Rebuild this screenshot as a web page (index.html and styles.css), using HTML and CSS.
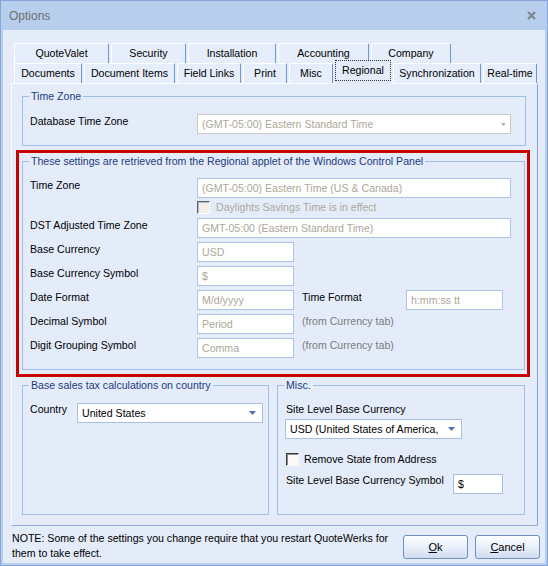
FILE: index.html
```html
<!DOCTYPE html>
<html>
<head>
<meta charset="utf-8">
<title>Options</title>
<link rel="stylesheet" href="styles.css">
</head>
<body>
<div class="window">
  <div class="titlebar">
    <span class="title">Options</span>
    <svg class="close" width="9" height="9" viewBox="0 0 9 9"><path d="M1 1 L8 8 M8 1 L1 8" stroke="#7d8797" stroke-width="2.3" fill="none"/></svg>
  </div>
  <div class="client">
    <div class="tabs">
      <div class="tabrow">
        <div class="tab w95">QuoteValet</div>
        <div class="tab w75">Security</div>
        <div class="tab w88">Installation</div>
        <div class="tab w91">Accounting</div>
        <div class="tab w80">Company</div>
      </div>
      <div class="tabrow">
        <div class="tab w68">Documents</div>
        <div class="tab w91">Document Items</div>
        <div class="tab w64">Field Links</div>
        <div class="tab w44">Print</div>
        <div class="tab w44">Misc</div>
        <div class="tab selected w56"><span class="focus">Regional</span></div>
        <div class="tab w88">Synchronization</div>
        <div class="tab w54">Real-time</div>
      </div>
    </div>
    <div class="page">
      <fieldset class="group tzgroup">
        <legend>Time Zone</legend>
        <div class="tz-body">
          <span class="lbl">Database Time Zone</span>
          <span class="combo disabled long"><span class="combo-text">(GMT-05:00) Eastern Standard Time</span><svg width="5" height="3" viewBox="0 0 5 3"><path d="M0 0H5L2.5 3Z" fill="#c6a2c4"/></svg></span>
        </div>
      </fieldset>
      <div class="highlight">
        <fieldset class="group regional">
          <legend>These settings are retrieved from the Regional applet of the Windows Control Panel</legend>
          <div class="reg-body">
            <div class="row"><span class="lbl">Time Zone</span><span class="field long">(GMT-05:00) Eastern Time (US &amp; Canada)</span></div>
            <div class="row check-row"><span class="lbl"></span><span class="checkbox disabled"></span><span class="check-label gray">Daylights Savings Time is in effect</span></div>
            <div class="row"><span class="lbl">DST Adjusted Time Zone</span><span class="field long">GMT-05:00 (Eastern Standard Time)</span></div>
            <div class="row"><span class="lbl">Base Currency</span><span class="field short">USD</span></div>
            <div class="row"><span class="lbl">Base Currency Symbol</span><span class="field short">$</span></div>
            <div class="row"><span class="lbl">Date Format</span><span class="field short">M/d/yyyy</span><span class="lbl2">Time Format</span><span class="field short">h:mm:ss tt</span></div>
            <div class="row"><span class="lbl">Decimal Symbol</span><span class="field short">Period</span><span class="hint">(from Currency tab)</span></div>
            <div class="row"><span class="lbl">Digit Grouping Symbol</span><span class="field short">Comma</span><span class="hint">(from Currency tab)</span></div>
          </div>
        </fieldset>
      </div>
      <div class="lower">
        <fieldset class="group country">
          <legend>Base sales tax calculations on country</legend>
          <div class="country-body">
            <span class="lbl-country">Country</span>
            <span class="combo enabled country-combo"><span class="combo-text">United States</span><svg width="7" height="4" viewBox="0 0 7 4"><path d="M0 0H7L3.5 4Z" fill="#4d6fb8"/></svg></span>
          </div>
        </fieldset>
        <fieldset class="group misc">
          <legend>Misc.</legend>
          <div class="misc-body">
            <span class="misc-lbl">Site Level Base Currency</span>
            <span class="combo enabled misc-combo"><span class="combo-text">USD (United States of America,</span><svg width="7" height="4" viewBox="0 0 7 4"><path d="M0 0H7L3.5 4Z" fill="#4d6fb8"/></svg></span>
            <div class="misc-check"><span class="checkbox"></span><span class="check-label">Remove State from Address</span></div>
            <div class="misc-symbol"><span class="symbol-lbl">Site Level Base Currency Symbol</span><span class="field enabled-field symbol">$</span></div>
          </div>
        </fieldset>
      </div>
    </div>
    <div class="footer">
      <p class="note">NOTE: Some of the settings you change require that you restart QuoteWerks for<br>them to take effect.</p>
      <div class="buttons">
        <button class="btn"><u>O</u>k</button>
        <button class="btn"><u>C</u>ancel</button>
      </div>
    </div>
  </div>
</div>
</body>
</html>
```

FILE: styles.css
```css
* { box-sizing: border-box; }
html, body { margin: 0; padding: 0; }
body {
  font-family: "Liberation Sans", Arial, sans-serif;
  font-size: 10.6px;
  color: #000;
  background: #ffffff;
}
.window {
  width: 548px;
  height: 566px;
  background: #b7cfec;
  border: 1px solid #86a5d8;
  padding: 0 2px 2px 2px;
  display: flex;
  flex-direction: column;
}
.titlebar {
  height: 29px;
  flex: none;
  display: flex;
  align-items: center;
  justify-content: space-between;
  padding: 0 9px 0 6px;
}
.title { font-size: 12px; color: #6e6e6e; }
.close { margin-top: -1px; }
.client {
  flex: 1;
  background: #e4ecfa;
  padding-top: 13px;
  display: flex;
  flex-direction: column;
}
.tabs { margin-left: 11px; }
.tabrow { display: flex; gap: 2px; height: 20px; align-items: flex-end; }
.tab {
  height: 20px;
  flex: none;
  border-top: 1px solid #ffffff;
  border-left: 1px solid #ffffff;
  border-right: 1px solid #6e96d6;
  border-radius: 2px 2px 0 0;
  background: #e6eefb;
  text-align: center;
  line-height: 18px;
  white-space: nowrap;
}
.w95 { width: 95px; }
.w75 { width: 75px; }
.w88 { width: 88px; }
.w91 { width: 91px; }
.w80 { width: 80px; }
.w68 { width: 68px; }
.w64 { width: 64px; }
.w44 { width: 44px; }
.w56 { width: 56px; }
.w54 { width: 54px; }
.tab.selected {
  height: 24px;
  margin-bottom: -1px;
  position: relative;
  z-index: 1;
  border: none;
  background: #e4ecfa;
}
.focus {
  display: block;
  height: 21px;
  border: 1px dotted #333;
  line-height: 18px;
}
.page {
  margin-left: 8px;
  width: 527px;
  height: 443px;
  border: 1px solid;
  border-color: #fbfdff #7fa2da #8eaee0 #fbfdff;
  background: #e4ecfa;
  display: flex;
  flex-direction: column;
}
.group {
  border: 1px solid #a0bee8;
  margin: 0;
  padding: 0;
  min-width: 0;
}
.group legend {
  padding: 0 2px;
  margin-left: 6px;
  line-height: 14px;
  color: #1b3b7c;
}
.tzgroup { margin: 5px 0 0 10px; width: 504px; }
.tz-body { padding: 11px 0 11px 7px; display: flex; align-items: flex-start; }
.lbl { width: 167px; flex: none; line-height: 14px; }
.combo {
  height: 20px;
  display: flex;
  align-items: center;
  justify-content: space-between;
  background: #fff;
  border: 1px solid #a9bfdf;
  padding: 0 6px 0 4px;
  white-space: nowrap;
}
.combo-text { overflow: hidden; min-width: 0; }
.combo svg { flex: none; margin-left: 3px; }
.combo.disabled { border-color: #cbc8bf; color: #aca899; padding-right: 4px; }
.long { width: 314px; }
.highlight {
  margin: 4px 0 0 4px;
  width: 514px;
  border: 3px solid #c70000;
  padding: 1px 2px 4px 3px;
}
.regional { width: 503px; }
.reg-body {
  padding: 10px 0 11px 7px;
  display: flex;
  flex-direction: column;
  gap: 4px;
}
.row { display: flex; align-items: flex-start; height: 20px; }
.field {
  height: 20px;
  flex: none;
  background: #fff;
  border: 1px solid #a9c4e8;
  color: #aca899;
  padding-left: 4px;
  line-height: 18px;
  white-space: nowrap;
  overflow: hidden;
}
.short { width: 97px; }
.check-row { height: 13px; margin-top: -1px; }
.checkbox {
  width: 13px;
  height: 13px;
  flex: none;
  border: 1px solid;
  border-color: #3a3a3a #f4f4f4 #f4f4f4 #3a3a3a;
  box-shadow: inset 1px 1px 0 #8a8a8a;
  background: #fbfaf6;
}
.checkbox.disabled {
  border-color: #5b6170 #ffffff #ffffff #5b6170;
  box-shadow: inset 1px 1px 0 #b9bcc4;
  background: #f3eee8;
}
.check-label { margin-left: 6px; line-height: 13px; white-space: nowrap; }
.gray { color: #aca899; }
.lbl2 { width: 104px; margin-left: 8px; flex: none; line-height: 14px; }
.hint { margin-left: 8px; color: #7b7b7b; line-height: 14px; white-space: nowrap; }
.lower { display: flex; gap: 8px; margin: 1px 0 0 10px; }
.country { width: 247px; height: 137px; }
.misc { width: 248px; height: 137px; }
.country-body { padding: 11px 0 0 7px; display: flex; align-items: flex-start; }
.lbl-country { width: 47px; flex: none; line-height: 13px; }
.combo.enabled { color: #000; }
.country-combo { width: 186px; }
.misc-body { padding: 10px 0 0 8px; display: flex; flex-direction: column; align-items: flex-start; }
.misc-lbl { line-height: 14px; }
.misc-combo { width: 177px; margin: 3px 0 0 -1px; padding-right: 6px; }
.misc-check { display: flex; align-items: center; margin-top: 14px; height: 13px; }
.misc-check .check-label { margin-left: 5px; }
.misc-symbol { display: flex; align-items: flex-start; margin-top: 8px; }
.symbol-lbl { width: 167px; flex: none; line-height: 13px; }
.enabled-field { color: #000; border-color: #a9bfdf; width: 50px; }
.footer {
  display: flex;
  justify-content: space-between;
  align-items: flex-start;
  padding: 5px 5px 0 9px;
}
.note { margin: 0; line-height: 15px; }
.buttons { display: flex; gap: 7px; margin-top: 4px; }
.btn {
  width: 65px;
  height: 24px;
  border: 1px solid #6f8fbf;
  border-radius: 3px;
  background: linear-gradient(#fdfeff, #eaf0fb 50%, #cfdcf1);
  font-family: "Liberation Sans", Arial, sans-serif;
  font-size: 11px;
  color: #000;
  padding: 0;
}
.btn u { text-decoration: underline; }
```
